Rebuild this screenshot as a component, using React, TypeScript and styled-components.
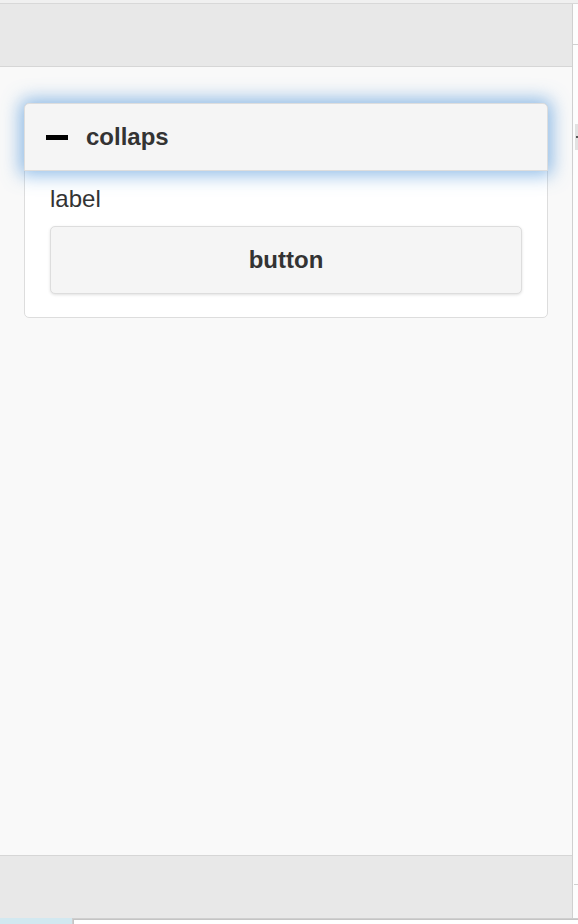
import React from "react";
import styled, { createGlobalStyle } from "styled-components";

const Global = createGlobalStyle`
  html, body { margin: 0; padding: 0; }
  body {
    background: #f9f9f9;
    font-family: "Liberation Sans", Arial, sans-serif;
    color: #333;
    overflow: hidden;
  }
`;

const Frame = styled.div`
  width: 578px;
  height: 924px;
  display: flex;
  flex-direction: column;
  background: #f9f9f9;
`;

const TopStrip = styled.div`
  height: 3px;
  background: #f0f0f0;
  border-bottom: 1px solid #d8d8d8;
  flex: none;
`;

const Body = styled.div`
  flex: 1;
  display: flex;
  min-height: 0;
`;

const MainColumn = styled.div`
  width: 572px;
  display: flex;
  flex-direction: column;
  border-right: 1px solid #d0d0d0;
`;

const Band = styled.div<{ $top?: boolean }>`
  height: 62px;
  flex: none;
  background: #e8e8e8;
  ${(p) => (p.$top ? "border-bottom: 1px solid #d6d6d6;" : "border-top: 1px solid #d6d6d6;")}
`;

const Content = styled.div`
  flex: 1;
  background: #f9f9f9;
  padding: 36px 24px 0 24px;
`;

const SideRail = styled.div`
  flex: 1;
  display: flex;
  flex-direction: column;
  background: #fdfdfd;
`;

const RailTop = styled.div`
  height: 40px;
  border-bottom: 1px solid #d0d0d0;
  flex: none;
`;

const RailTab = styled.div`
  margin: 79px 0 0 2px;
  height: 26px;
  background: #e2e2e2;
  position: relative;
  &::after {
    content: "";
    position: absolute;
    left: 1px;
    top: 12px;
    width: 3px;
    height: 2px;
    background: #555;
  }
`;

const RailSpacer = styled.div`
  flex: 1;
`;

const RailBottomLine = styled.div`
  height: 33px;
  border-top: 1px solid #d0d0d0;
  margin-left: 1px;
  flex: none;
`;

const BottomStrip = styled.div`
  height: 6px;
  flex: none;
  display: flex;
  background: #cfcfcf;
`;

const BottomCell = styled.div`
  width: 72px;
  background: #d2e8f0;
`;

const BottomField = styled.div`
  flex: 1;
  margin: 1px 0 0 1px;
  background: #ffffff;
  border-top: 1px solid #c4c4c4;
  border-left: 1px solid #c4c4c4;
`;

const Panel = styled.div`
  background: #ffffff;
  border: 1px solid #dddddd;
  border-radius: 5px;
  padding-bottom: 23px;
`;

const PanelHeader = styled.div`
  box-sizing: border-box;
  height: 68px;
  display: flex;
  align-items: center;
  gap: 18px;
  padding: 0 21px;
  background: #f5f5f5;
  border: 1px solid #dddddd;
  border-radius: 5px 5px 0 0;
  box-shadow: 0 0 18px 4px rgba(88, 155, 220, 0.68);
  position: relative;
  margin: -1px -1px 0 -1px;
`;

const MinusIcon = styled.span`
  display: block;
  width: 22px;
  height: 5px;
  background: #000;
`;

const Title = styled.span`
  font-size: 24px;
  font-weight: bold;
  color: #333;
`;

const PanelBody = styled.div`
  padding: 14px 25px 0 25px;
  display: flex;
  flex-direction: column;
  gap: 13px;
`;

const Label = styled.div`
  font-size: 24px;
  line-height: 28px;
  color: #333;
`;

const Button = styled.button`
  height: 68px;
  width: 100%;
  background: #f5f5f5;
  border: 1px solid #dddddd;
  border-radius: 5px;
  box-shadow: 0 1px 3px rgba(0, 0, 0, 0.12);
  font-family: "Liberation Sans", Arial, sans-serif;
  font-size: 24px;
  font-weight: bold;
  color: #333;
  cursor: pointer;
`;

export default function App() {
  return (
    <>
      <Global />
      <Frame>
        <TopStrip />
        <Body>
          <MainColumn>
            <Band $top />
            <Content>
              <Panel>
                <PanelHeader>
                  <MinusIcon />
                  <Title>collaps</Title>
                </PanelHeader>
                <PanelBody>
                  <Label>label</Label>
                  <Button>button</Button>
                </PanelBody>
              </Panel>
            </Content>
            <Band />
          </MainColumn>
          <SideRail>
            <RailTop />
            <RailTab />
            <RailSpacer />
            <RailBottomLine />
          </SideRail>
        </Body>
        <BottomStrip>
          <BottomCell />
          <BottomField />
        </BottomStrip>
      </Frame>
    </>
  );
}
